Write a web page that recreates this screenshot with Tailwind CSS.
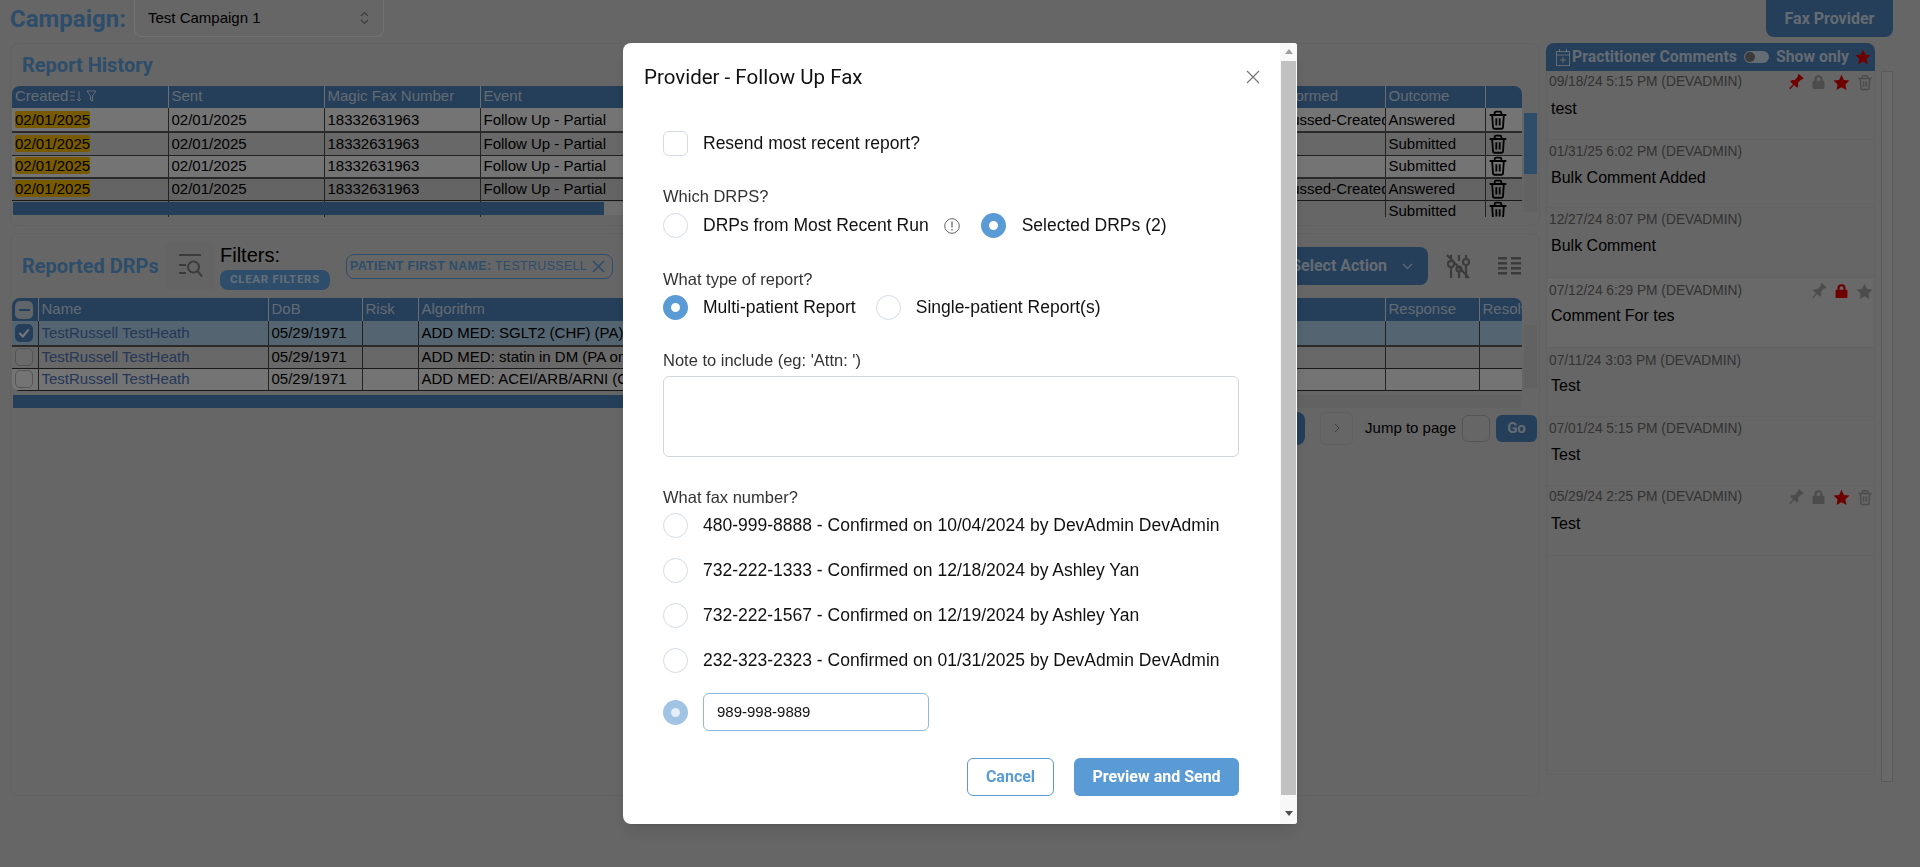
<!DOCTYPE html>
<html lang="en">
<head>
<meta charset="UTF-8">
<title>Provider - Follow Up Fax</title>
<script src="https://cdn.jsdelivr.net/npm/@tailwindcss/browser@4"></script>
</head>
<body class="h-screen overflow-hidden bg-[#cccccc] font-['Liberation_Sans',sans-serif] text-black">

<svg class="hidden">
  <symbol id="trash" viewBox="0 0 24 24"><path fill="none" stroke="currentColor" stroke-width="2.2" d="M2 6h20M8 6V3.500A1.500 1.500 0 0 1 9.500 2h5A1.500 1.500 0 0 1 16 3.500V6M5 6l1 15a1.500 1.500 0 0 0 1.500 1.500h9A1.500 1.500 0 0 0 18 21l1-15M10 10v8.500M14 10v8.500"/></symbol>
  <symbol id="star" viewBox="0 0 24 24"><path fill="currentColor" d="M12 1l3.400 7.300 7.900 1-5.800 5.500 1.500 7.900-7-3.900-7 3.900 1.500-7.900L.7 9.300l7.900-1z"/></symbol>
  <symbol id="pin" viewBox="0 0 24 24"><g transform="rotate(42 12 12)"><path fill="currentColor" d="M7.500 0h9v2l-1.500 1.500v6.500l3.500 3.500V16H13v7l-1 2-1-2v-7H5.500v-2.500L9 10V3.500L7.500 2z"/></g></symbol>
  <symbol id="lock" viewBox="0 0 24 24"><path fill="currentColor" d="M12 1a6.500 6.500 0 0 0-6.500 6.500V10H4a1.500 1.500 0 0 0-1.500 1.500v10A1.500 1.500 0 0 0 4 23h16a1.500 1.500 0 0 0 1.500-1.500v-10A1.500 1.500 0 0 0 20 10h-1.500V7.500A6.500 6.500 0 0 0 12 1zm-3 9V7.500a3 3 0 0 1 6 0V10z"/></symbol>
  <symbol id="check" viewBox="0 0 24 24"><path fill="none" stroke="currentColor" stroke-width="3.500" stroke-linecap="round" stroke-linejoin="round" d="M5 13l5 5 9-11"/></symbol>
</svg>

<div class="flex h-[37px] items-center pl-[10px]">
  <span class="w-[124px] font-['Roboto',sans-serif] text-[24px] font-bold text-[#5b9bd5]">Campaign:</span>
  <div class="flex h-[37px] w-[250px] items-center justify-between rounded-b-lg border border-t-0 border-[#e5e5e5] bg-[#cccccc] pl-[13px] pr-[14px] text-[15px]">
    <span>Test Campaign 1</span>
    <svg class="h-[14px] w-[9px] text-[#777]" viewBox="0 0 9 14" fill="none" stroke="currentColor" stroke-width="1.100"><path d="M1 5l3.500-3.500L8 5M1 9l3.500 3.500L8 9"/></svg>
  </div>
  <button class="ml-auto mr-[27px] h-[37px] w-[127px] rounded-b-lg bg-[#4a7cb2] font-['Roboto',sans-serif] text-[16px] font-bold text-white/70">Fax Provider</button>
</div>

<div class="mt-[6px] flex pl-[10px]">
  <div class="flex w-[1530px] flex-col gap-[7px]">
    <!-- report history -->
    <section class="relative h-[183px] rounded-lg border border-[#c4c4c4]">
      <h2 class="flex h-[42px] items-center pl-[11px] font-['Roboto',sans-serif] text-[20px] font-bold text-[#5b9bd5]">Report History</h2>
      <div class="ml-[1px] h-[131px] w-[1510px] overflow-hidden rounded-t-lg">
        <table class="w-[1511px] table-fixed border-collapse text-[15px] leading-[20px]">
          <colgroup><col class="w-[156px]"><col class="w-[156px]"><col class="w-[156px]"><col class="w-[785px]"><col class="w-[120px]"><col class="w-[100px]"><col class="w-[38px]"></colgroup>
          <thead class="bg-[#4a7cb2] text-white/70">
            <tr class="h-[22px]">
              <th class="border-r border-[#dddddd] pb-[2px] pl-[3px] text-left font-normal"><span class="flex items-center gap-[2px]">Created
                <svg class="h-[12px] w-[11px]" viewBox="0 0 11 12" fill="none" stroke="currentColor"><path d="M0 2h5M0 6h5M0 10h5M9 1v10M7 9l2 2 2-2"/></svg>
                <svg class="ml-[3px] h-[12px] w-[11px]" viewBox="0 0 11 12" fill="none" stroke="currentColor"><path d="M1 1h9L6.500 6v5l-2-1V6z"/></svg></span></th>
              <th class="border-r border-[#dddddd] pb-[2px] pl-[3px] text-left font-normal">Sent</th>
              <th class="border-r border-[#dddddd] pb-[2px] pl-[3px] text-left font-normal">Magic Fax Number</th>
              <th class="pb-[2px] pl-[3px] text-left font-normal">Event</th>
              <th class="border-r border-[#dddddd] pb-[2px] pl-[3px] text-left font-normal">Performed</th>
              <th class="border-r border-[#dddddd] pb-[2px] pl-[3px] text-left font-normal">Outcome</th>
              <th></th>
            </tr>
          </thead>
          <tbody>
            <tr class="h-[24px] border-b-2 border-[#555] bg-[#e8e8e8]">
              <td class="border-r border-[#444] pl-[3px]"><mark class="rounded-[2px] bg-[#f0b400]">02/01/2025</mark></td>
              <td class="border-r border-[#444] pl-[3px]">02/01/2025</td>
              <td class="border-r border-[#444] pl-[3px]">18332631963</td>
              <td class="pl-[3px]">Follow Up - Partial</td>
              <td class="overflow-hidden whitespace-nowrap border-r border-[#444] pl-[3px] indent-[-6px]">Discussed-Created</td>
              <td class="border-r border-[#444] pl-[3px]">Answered</td>
              <td class="pl-[2px]"><svg class="h-[20px] w-[20px]"><use href="#trash"/></svg></td>
            </tr>
            <tr class="h-[23px] border-b border-[#444] bg-[#d0d0d0]">
              <td class="border-r border-[#444] pl-[3px]"><mark class="rounded-[2px] bg-[#f0b400]">02/01/2025</mark></td>
              <td class="border-r border-[#444] pl-[3px]">02/01/2025</td>
              <td class="border-r border-[#444] pl-[3px]">18332631963</td>
              <td class="pl-[3px]">Follow Up - Partial</td>
              <td class="border-r border-[#444] pl-[3px]"></td>
              <td class="border-r border-[#444] pl-[3px]">Submitted</td>
              <td class="pl-[2px]"><svg class="h-[20px] w-[20px]"><use href="#trash"/></svg></td>
            </tr>
            <tr class="h-[23px] border-b-2 border-[#555] bg-[#e8e8e8]">
              <td class="border-r border-[#444] pl-[3px]"><mark class="rounded-[2px] bg-[#f0b400]">02/01/2025</mark></td>
              <td class="border-r border-[#444] pl-[3px]">02/01/2025</td>
              <td class="border-r border-[#444] pl-[3px]">18332631963</td>
              <td class="pl-[3px]">Follow Up - Partial</td>
              <td class="border-r border-[#444] pl-[3px]"></td>
              <td class="border-r border-[#444] pl-[3px]">Submitted</td>
              <td class="pl-[2px]"><svg class="h-[20px] w-[20px]"><use href="#trash"/></svg></td>
            </tr>
            <tr class="h-[22px] border-b border-[#333] bg-[#c8c8c8]">
              <td class="border-r border-[#444] pl-[3px]"><mark class="rounded-[2px] bg-[#f0b400]">02/01/2025</mark></td>
              <td class="border-r border-[#444] pl-[3px]">02/01/2025</td>
              <td class="border-r border-[#444] pl-[3px]">18332631963</td>
              <td class="pl-[3px]">Follow Up - Partial</td>
              <td class="overflow-hidden whitespace-nowrap border-r border-[#444] pl-[3px] indent-[-6px]">Discussed-Created</td>
              <td class="border-r border-[#444] pl-[3px]">Answered</td>
              <td class="pl-[2px]"><svg class="h-[20px] w-[20px]"><use href="#trash"/></svg></td>
            </tr>
            <tr class="h-[22px] bg-[#cccccc]">
              <td class="border-r border-[#444]"></td>
              <td class="border-r border-[#444]"></td>
              <td class="border-r border-[#444]"></td>
              <td></td>
              <td class="border-r border-[#444]"></td>
              <td class="border-r border-[#444] pl-[3px]">Submitted</td>
              <td class="pl-[2px] align-top"><svg class="h-[20px] w-[20px]"><use href="#trash"/></svg></td>
            </tr>
          </tbody>
        </table>
      </div>
      <div class="absolute left-[2px] top-[158px] h-[13px] w-[1260px] bg-[#dddddd]"><div class="h-full w-[591px] bg-[#4a7cb2]"></div></div>
      <div class="absolute left-[1513px] top-[69px] h-[99px] w-[13px] bg-[#c4c4c4]"><div class="h-[61px] bg-[#5b9bd5]"></div></div>
    </section>

    <!-- reported drps -->
    <section class="relative h-[563px] rounded-lg border border-[#c4c4c4]">
      <div class="flex h-[64px] items-center pl-[11px] pr-[18px]">
        <h2 class="w-[143px] font-['Roboto',sans-serif] text-[20px] font-bold text-[#5b9bd5]">Reported DRPs</h2>
        <div class="flex h-[48px] w-[50px] items-center justify-center rounded-lg bg-[#c8c8c8]">
          <svg class="h-[26px] w-[25px] text-[#777]" viewBox="0 0 25 26" fill="none" stroke="currentColor" stroke-width="2"><path d="M1 2h22M1 12h7M1 20h7"/><circle cx="15.500" cy="14" r="5.500"/><path d="M19.500 18l4.500 5.500"/></svg>
        </div>
        <div class="ml-[5px] flex w-[126px] flex-col items-start">
          <span class="text-[20px] leading-[24px]">Filters:</span>
          <span class="mt-[3px] flex h-[20px] w-[110px] items-center justify-center rounded-lg bg-[#5b9bd5] font-['Roboto',sans-serif] text-[11.500px] font-bold tracking-[0.7px] text-white/70">CLEAR FILTERS</span>
        </div>
        <div class="flex h-[25px] w-[267px] items-center justify-between rounded-lg border border-[#5b9bd5] pl-[3px] pr-[7px] text-[12.500px] tracking-[0.3px] text-[#5b9bd5]">
          <span class="whitespace-nowrap"><b class="font-bold">PATIENT FIRST NAME:</b> TESTRUSSELL</span>
          <svg class="h-[13px] w-[13px]" viewBox="0 0 13 13" fill="none" stroke="currentColor" stroke-width="1.600"><path d="M1 1l11 11M12 1L1 12"/></svg>
        </div>
        <button class="ml-auto flex h-[38px] w-[227px] items-center justify-end rounded-lg bg-[#4a7cb2] pr-[15px] font-['Roboto',sans-serif] text-[16px] font-bold text-white/70">Select Action
          <svg class="ml-[15px] h-[7px] w-[11px]" viewBox="0 0 11 7" fill="none" stroke="currentColor" stroke-width="1.200"><path d="M1 1l4.500 4.500L10 1"/></svg>
        </button>
        <svg class="ml-[18px] h-[25px] w-[25px] text-[#777]" viewBox="0 0 25 25" fill="none" stroke="currentColor" stroke-width="2.200"><path d="M5 1v5M5 13v11M13 1v6M13 18v6M20 1v3M20 12v12M1 1l22 23"/><circle cx="5" cy="10" r="3"/><circle cx="13" cy="15" r="2.500"/><circle cx="20" cy="8" r="3"/></svg>
        <svg class="ml-[27px] h-[18px] w-[23px] text-[#777]" viewBox="0 0 23 18" fill="currentColor"><path d="M0 0h9v2.500H0zM13 0h10v2.500H13zM0 5h9v2.500H0zM13 5h10v2.500H13zM0 10h9v2.500H0zM13 10h10v2.500H13zM0 15h9v2.500H0zM13 15h10v2.500H13z"/></svg>
      </div>
      <div class="ml-[1px] w-[1510px] overflow-hidden rounded-t-lg rounded-bl-lg">
        <table class="w-[1511px] table-fixed border-collapse text-[15px] leading-[20px]">
          <colgroup><col class="w-[26px]"><col class="w-[230px]"><col class="w-[94px]"><col class="w-[56px]"><col class="w-[967px]"><col class="w-[94px]"><col class="w-[44px]"></colgroup>
          <thead class="bg-[#4a7cb2] text-white/70">
            <tr class="h-[23px]">
              <th class="border-r border-[#dddddd] pl-[3px]"><span class="flex h-[18px] w-[18px] items-center justify-center rounded-[5px] bg-[#dddddd]/80"><span class="h-[2px] w-[11px] bg-[#4a7cb2]"></span></span></th>
              <th class="border-r border-[#dddddd] pb-[2px] pl-[3px] text-left font-normal">Name</th>
              <th class="border-r border-[#dddddd] pb-[2px] pl-[3px] text-left font-normal">DoB</th>
              <th class="border-r border-[#dddddd] pb-[2px] pl-[3px] text-left font-normal">Risk</th>
              <th class="border-r border-[#dddddd] pb-[2px] pl-[3px] text-left font-normal">Algorithm</th>
              <th class="border-r border-[#dddddd] pb-[2px] pl-[3px] text-left font-normal">Response</th>
              <th class="overflow-hidden whitespace-nowrap pb-[2px] pl-[3px] text-left font-normal">Resolved</th>
            </tr>
          </thead>
          <tbody>
            <tr class="h-[25px] border-b-2 border-[#555] bg-[#a8c8e2]">
              <td class="border-r border-[#444] pl-[3px]"><span class="flex h-[18px] w-[18px] items-center justify-center rounded-[5px] bg-[#4a7cb2] text-white/90"><svg class="h-[14px] w-[14px]"><use href="#check"/></svg></span></td>
              <td class="border-r border-[#444] pl-[3px] text-[#4a70b0]">TestRussell TestHeath</td>
              <td class="border-r border-[#444] pl-[3px]">05/29/1971</td>
              <td class="border-r border-[#444]"></td>
              <td class="border-r border-[#444] pl-[3px]">ADD MED: SGLT2 (CHF) (PA)</td>
              <td class="border-r border-[#444]"></td>
              <td></td>
            </tr>
            <tr class="h-[22px] border-b border-[#333] bg-[#d0d0d0]">
              <td class="border-r border-[#444] pl-[3px]"><span class="block h-[18px] w-[18px] rounded-[5px] border border-[#aaaaaa] bg-[#d4d4d4]"></span></td>
              <td class="border-r border-[#444] pl-[3px] text-[#4a70b0]">TestRussell TestHeath</td>
              <td class="border-r border-[#444] pl-[3px]">05/29/1971</td>
              <td class="border-r border-[#444]"></td>
              <td class="border-r border-[#444] pl-[3px]">ADD MED: statin in DM (PA only)</td>
              <td class="border-r border-[#444]"></td>
              <td></td>
            </tr>
            <tr class="h-[22px] border-b border-[#333] bg-[#e8e8e8]">
              <td class="border-r border-[#444] pl-[3px]"><span class="block h-[18px] w-[18px] rounded-[5px] border border-[#aaaaaa]"></span></td>
              <td class="border-r border-[#444] pl-[3px] text-[#4a70b0]">TestRussell TestHeath</td>
              <td class="border-r border-[#444] pl-[3px]">05/29/1971</td>
              <td class="border-r border-[#444]"></td>
              <td class="border-r border-[#444] pl-[3px]">ADD MED: ACEI/ARB/ARNI (CHF)</td>
              <td class="border-r border-[#444]"></td>
              <td></td>
            </tr>
          </tbody>
        </table>
      </div>
      <div class="ml-[2px] mt-[4px] h-[13px] w-[1508px] bg-[#c4c4c4]"><div class="h-full w-[1250px] bg-[#4a7cb2]"></div></div>
      <div class="absolute left-[1513px] top-[91px] h-[63px] w-[13px] bg-[#c4c4c4]"></div>
      <div class="mt-[4px] flex h-[33px] items-center justify-end pr-[2px] text-[15px]">
        <span class="h-[33px] w-[60px] rounded-r-lg bg-[#4a7cb2]"></span>
        <span class="ml-[15px] flex h-[33px] w-[33px] items-center justify-center rounded-md border border-[#c0c0c0]"><svg class="h-[10px] w-[6px] text-[#777]" viewBox="0 0 6 10" fill="none" stroke="currentColor"><path d="M1 1l4 4-4 4"/></svg></span>
        <span class="ml-[12px]">Jump to page</span>
        <span class="ml-[6px] h-[27px] w-[28px] rounded-md border border-[#aaaaaa]"></span>
        <span class="ml-[6px] flex h-[27px] w-[41px] items-center justify-center rounded-md bg-[#4a7cb2] font-['Roboto',sans-serif] font-bold text-white/70">Go</span>
      </div>
    </section>
  </div>

  <!-- comments -->
  <aside class="ml-[6px] flex w-[329px] flex-col">
    <div class="flex h-[28px] items-center rounded-t-lg bg-[#4a7cb2] pl-[10px] font-['Roboto',sans-serif] text-[15.800px] font-bold text-white/70">
      <svg class="h-[17px] w-[14px]" viewBox="0 0 14 17" fill="none" stroke="currentColor"><rect x=".5" y="2.500" width="13" height="14"/><path d="M.5 6h13M3.500 0v3M10.500 0v3M7 8v6M4 11h6"/></svg>
      <span class="ml-[2px] w-[172px] whitespace-nowrap">Practitioner Comments</span>
      <span class="flex h-[12px] w-[25px] items-center rounded-full bg-white/70 pl-[1px]"><span class="h-[10px] w-[10px] rounded-full bg-[#777]"></span></span>
      <span class="ml-[7px] w-[79px]">Show only</span>
      <svg class="h-[16px] w-[16px] text-[#dd0000]"><use href="#star"/></svg>
    </div>
    <div class="h-[704px] border border-t-0 border-[#c4c4c4]">
      <article class="h-[69px] border-b border-[#c4c4c4] pl-[2px] pr-[1px]">
        <div class="flex h-[22px] items-center justify-between text-[13.750px] text-[#666]"><span>09/18/24 5:15 PM (DEVADMIN)</span>
          <span class="flex items-center gap-[7px]"><svg class="h-[17px] w-[17px] text-[#dd0000]"><use href="#pin"/></svg><svg class="h-[16px] w-[15px] text-[#999]"><use href="#lock"/></svg><svg class="h-[17px] w-[17px] text-[#dd0000]"><use href="#star"/></svg><svg class="h-[17px] w-[16px] text-[#999]"><use href="#trash"/></svg></span></div>
        <p class="mt-[6px] pl-[2px] text-[16px] leading-[20px]">test</p>
      </article>
      <article class="h-[68px] border-b border-[#c4c4c4] pl-[2px] pr-[1px]">
        <div class="flex h-[24px] items-center text-[13.750px] text-[#666]">01/31/25 6:02 PM (DEVADMIN)</div>
        <p class="mt-[4px] pl-[2px] text-[16px] leading-[20px]">Bulk Comment Added</p>
      </article>
      <article class="h-[70px] border-b border-[#c4c4c4] pl-[2px] pr-[1px]">
        <div class="flex h-[24px] items-center text-[13.750px] text-[#666]">12/27/24 8:07 PM (DEVADMIN)</div>
        <p class="mt-[4px] pl-[2px] text-[16px] leading-[20px]">Bulk Comment</p>
      </article>
      <article class="h-[70px] border-b border-[#c4c4c4] bg-[#d2d2d2] pl-[2px] pr-[1px]">
        <div class="flex h-[26px] items-center justify-between text-[13.750px] text-[#666]"><span>07/12/24 6:29 PM (DEVADMIN)</span>
          <span class="flex items-center gap-[7px]"><svg class="h-[17px] w-[17px] text-[#999]"><use href="#pin"/></svg><svg class="h-[16px] w-[15px] text-[#dd0000]"><use href="#lock"/></svg><svg class="h-[17px] w-[17px] text-[#999]"><use href="#star"/></svg></span></div>
        <p class="mt-[2px] pl-[2px] text-[16px] leading-[20px]">Comment For tes</p>
      </article>
      <article class="h-[69px] border-b border-[#c4c4c4] pl-[2px] pr-[1px]">
        <div class="flex h-[26px] items-center text-[13.750px] text-[#666]">07/11/24 3:03 PM (DEVADMIN)</div>
        <p class="mt-[2px] pl-[2px] text-[16px] leading-[20px]">Test</p>
      </article>
      <article class="h-[69px] border-b border-[#c4c4c4] pl-[2px] pr-[1px]">
        <div class="flex h-[24px] items-center text-[13.750px] text-[#666]">07/01/24 5:15 PM (DEVADMIN)</div>
        <p class="mt-[4px] pl-[2px] text-[16px] leading-[20px]">Test</p>
      </article>
      <article class="h-[70px] border-b border-[#c4c4c4] pl-[2px] pr-[1px]">
        <div class="flex h-[22px] items-center justify-between text-[13.750px] text-[#666]"><span>05/29/24 2:25 PM (DEVADMIN)</span>
          <span class="flex items-center gap-[7px]"><svg class="h-[17px] w-[17px] text-[#999]"><use href="#pin"/></svg><svg class="h-[16px] w-[15px] text-[#999]"><use href="#lock"/></svg><svg class="h-[17px] w-[17px] text-[#dd0000]"><use href="#star"/></svg><svg class="h-[17px] w-[16px] text-[#999]"><use href="#trash"/></svg></span></div>
        <p class="mt-[6px] pl-[2px] text-[16px] leading-[20px]">Test</p>
      </article>
    </div>
  </aside>
  <div class="ml-[6px] mt-[28px] h-[711px] w-[12px] border border-[#b4b4b4] bg-[#d2d2d2]"></div>
</div>

<div class="fixed inset-0 bg-[rgba(0,0,0,0.5)]"></div>

<div class="fixed left-[623px] top-[43px] flex h-[781px] w-[674px] overflow-hidden rounded-l-lg rounded-r-[3px] bg-white shadow-lg">
  <div class="w-[657px]">
    <div class="flex h-[68px] items-center justify-between pl-[21px] pr-[20px]">
      <h3 class="font-['Roboto',sans-serif] text-[20.500px] text-[#111]">Provider - Follow Up Fax</h3>
      <svg class="h-[14px] w-[14px] text-[#777]" viewBox="0 0 14 14" fill="none" stroke="currentColor" stroke-width="1.200"><path d="M1 1l12 12M13 1L1 13"/></svg>
    </div>
    <div class="pl-[40px] pr-[41px] pt-[20px]">
      <label class="flex h-[25px] items-center text-[17.500px] text-[#111]"><span class="mr-[15px] h-[25px] w-[25px] rounded-md border border-[#d5dbe3]"></span>Resend most recent report?</label>

      <p class="mt-[30px] h-[20px] text-[16.500px] leading-[20px] text-[#333]">Which DRPS?</p>
      <div class="mt-[7px] flex h-[25px] items-center text-[17.500px] text-[#111]">
        <span class="mr-[15px] h-[25px] w-[25px] rounded-full border border-[#d5dbe3]"></span>DRPs from Most Recent Run
        <svg class="ml-[15px] h-[16px] w-[16px] text-[#666]" viewBox="0 0 16 16" fill="none" stroke="currentColor"><circle cx="8" cy="8" r="7.300"/><path d="M8 3.500v6M8 11v1.500" stroke-width="1.300"/></svg>
        <span class="ml-[21px] mr-[16px] h-[25px] w-[25px] rounded-full border-[8px] border-[#5b9bd5] bg-white"></span>Selected DRPs (2)
      </div>

      <p class="mt-[31px] h-[20px] text-[16.500px] leading-[20px] text-[#333]">What type of report?</p>
      <div class="mt-[6px] flex h-[25px] items-center text-[17.500px] text-[#111]">
        <span class="mr-[15px] h-[25px] w-[25px] rounded-full border-[8px] border-[#5b9bd5] bg-white"></span>Multi-patient Report
        <span class="ml-[20px] mr-[15px] h-[25px] w-[25px] rounded-full border border-[#d5dbe3]"></span>Single-patient Report(s)
      </div>

      <p class="mt-[30px] h-[20px] text-[16.500px] leading-[20px] text-[#333]">Note to include (eg: 'Attn: ')</p>
      <div class="mt-[6px] h-[81px] rounded-md border border-[#d0d5dc]"></div>

      <p class="mt-[30px] h-[20px] text-[16.500px] leading-[20px] text-[#333]">What fax number?</p>
      <div class="mt-[6px] flex flex-col gap-[20px] text-[17.500px] text-[#111]">
        <div class="flex h-[25px] items-center"><span class="mr-[15px] h-[25px] w-[25px] rounded-full border border-[#d5dbe3]"></span>480-999-8888 - Confirmed on 10/04/2024 by DevAdmin DevAdmin</div>
        <div class="flex h-[25px] items-center"><span class="mr-[15px] h-[25px] w-[25px] rounded-full border border-[#d5dbe3]"></span>732-222-1333 - Confirmed on 12/18/2024 by Ashley Yan</div>
        <div class="flex h-[25px] items-center"><span class="mr-[15px] h-[25px] w-[25px] rounded-full border border-[#d5dbe3]"></span>732-222-1567 - Confirmed on 12/19/2024 by Ashley Yan</div>
        <div class="flex h-[25px] items-center"><span class="mr-[15px] h-[25px] w-[25px] rounded-full border border-[#d5dbe3]"></span>232-323-2323 - Confirmed on 01/31/2025 by DevAdmin DevAdmin</div>
      </div>
      <div class="mt-[20px] flex h-[38px] items-center">
        <span class="mr-[15px] h-[25px] w-[25px] rounded-full border-[8px] border-[#a2c4e4] bg-[#e6eff8]"></span>
        <span class="flex h-[38px] w-[226px] items-center rounded-md border border-[#90b8dd] pl-[13px] text-[15px] text-[#111]">989-998-9889</span>
      </div>
      <div class="mt-[27px] flex justify-end gap-[20px] font-['Roboto',sans-serif] text-[16px] font-bold">
        <button class="h-[38px] w-[87px] rounded-md border border-[#5b9bd5] text-[#5b9bd5]">Cancel</button>
        <button class="h-[38px] w-[165px] rounded-md bg-[#5b9bd5] text-white">Preview and Send</button>
      </div>
    </div>
  </div>
  <div class="flex w-[17px] flex-col items-center bg-[#f8f8f8]">
    <svg class="mt-[6px] h-[5px] w-[8px] text-[#a0a0a0]" viewBox="0 0 8 5" fill="currentColor"><path d="M4 0l4 5H0z"/></svg>
    <div class="mt-[7px] h-[734px] w-[15px] bg-[#c1c1c1]"></div>
    <svg class="mt-[16px] h-[5px] w-[8px] text-[#505050]" viewBox="0 0 8 5" fill="currentColor"><path d="M0 0h8L4 5z"/></svg>
  </div>
</div>
</body>
</html>
